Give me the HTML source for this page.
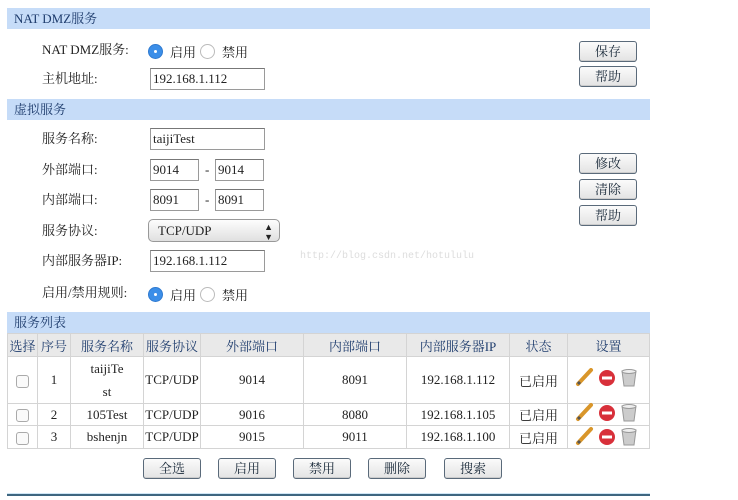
<!DOCTYPE html>
<html><head><meta charset="utf-8"><style>
*{margin:0;padding:0;box-sizing:border-box}
body{width:738px;height:500px;background:#fff;position:relative;overflow:hidden;font-family:"Liberation Serif","Noto Serif CJK SC",serif;font-size:13px;color:#222}
.a{position:absolute}
.hdr{position:absolute;left:7px;width:643px;height:21px;background:#c6dcf8;color:#1f3d6e;font-size:13px;line-height:21px;padding-left:7px}
.lbl{position:absolute;left:42px;line-height:16px}
.inp{position:absolute;height:22px;border:1px solid #9a9a9a;border-top-color:#777;background:#fff;font-size:13px;line-height:20px;padding-left:2px}
.btn{position:absolute;width:58px;height:21px;border:1px solid #5a6a7a;border-radius:3px;background:linear-gradient(#fbfbfb,#e3e3e3);text-align:center;line-height:20px;font-size:13px;color:#1a2a3a;box-shadow:inset 0 -1px 0 #ccc}
.rad{position:absolute;width:15px;height:15px;border-radius:50%}
.on{background:#3b8ee8;border:1px solid #2f7ad0}
.on:after{content:"";position:absolute;left:5px;top:5px;width:3px;height:3px;background:#fff;border-radius:50%}
.off{background:#fff;border:1px solid #bbb}
table{position:absolute;left:7px;top:333px;width:643px;border-collapse:collapse}
td,th{border:1px solid #d4d4d4;text-align:center;font-weight:normal;font-size:13px;padding:0}
th{background:#e9e9e9;color:#1f3d6e;height:23px}
.cb{display:inline-block;width:13px;height:13px;border:1px solid #aaa;border-radius:3px;background:#fafafa;vertical-align:middle}
</style></head><body>
<div class="hdr" style="top:8px">NAT DMZ服务</div>
<div class="lbl" style="top:42px">NAT DMZ服务:</div>
<div class="rad on" style="left:148px;top:44px"></div><div class="a" style="left:170px;top:42px">启用</div>
<div class="rad off" style="left:200px;top:44px"></div><div class="a" style="left:222px;top:42px">禁用</div>
<div class="lbl" style="top:71px">主机地址:</div>
<div class="inp" style="left:150px;top:68px;width:115px">192.168.1.112</div>
<div class="btn" style="left:579px;top:41px">保存</div>
<div class="btn" style="left:579px;top:66px">帮助</div>

<div class="hdr" style="top:99px">虚拟服务</div>
<div class="lbl" style="top:131px">服务名称:</div>
<div class="inp" style="left:150px;top:128px;width:115px">taijiTest</div>
<div class="lbl" style="top:162px">外部端口:</div>
<div class="inp" style="left:150px;top:159px;width:49px">9014</div><div class="a" style="left:205px;top:162px">-</div>
<div class="inp" style="left:215px;top:159px;width:49px">9014</div>
<div class="lbl" style="top:192px">内部端口:</div>
<div class="inp" style="left:150px;top:189px;width:49px">8091</div><div class="a" style="left:205px;top:192px">-</div>
<div class="inp" style="left:215px;top:189px;width:49px">8091</div>
<div class="lbl" style="top:223px">服务协议:</div>
<div class="a" style="left:148px;top:219px;width:132px;height:23px;border:1px solid #999;border-radius:5px;background:linear-gradient(#fdfdfd,#e0e0e0);padding-left:9px;line-height:21px">TCP/UDP<span style="position:absolute;right:6px;top:0;font-size:9px;line-height:10px;top:2px">▲<br>▼</span></div>
<div class="lbl" style="top:253px">内部服务器IP:</div>
<div class="inp" style="left:150px;top:250px;width:115px">192.168.1.112</div>
<div class="a" style="left:300px;top:251px;color:#ddd;font-family:'Liberation Mono',monospace;font-size:10px">http://blog.csdn.net/hotululu</div>
<div class="lbl" style="top:285px">启用/禁用规则:</div>
<div class="rad on" style="left:148px;top:287px"></div><div class="a" style="left:170px;top:285px">启用</div>
<div class="rad off" style="left:200px;top:287px"></div><div class="a" style="left:222px;top:285px">禁用</div>
<div class="btn" style="left:579px;top:153px">修改</div>
<div class="btn" style="left:579px;top:179px">清除</div>
<div class="btn" style="left:579px;top:205px">帮助</div>

<div class="hdr" style="top:312px">服务列表</div>
<table>
<tr><th style="width:30px">选择</th><th style="width:33px">序号</th><th style="width:73px">服务名称</th><th style="width:57px">服务协议</th><th style="width:103px">外部端口</th><th style="width:103px">内部端口</th><th style="width:103px">内部服务器IP</th><th style="width:58px">状态</th><th>设置</th></tr>
<tr style="height:46px"><td><span class="cb"></span></td><td>1</td><td style="line-height:23px">taijiTe<br>st</td><td>TCP/UDP</td><td>9014</td><td>8091</td><td>192.168.1.112</td><td>已启用</td><td class="ic"></td></tr>
<tr style="height:22px"><td><span class="cb"></span></td><td>2</td><td>105Test</td><td>TCP/UDP</td><td>9016</td><td>8080</td><td>192.168.1.105</td><td>已启用</td><td class="ic"></td></tr>
<tr style="height:23px"><td><span class="cb"></span></td><td>3</td><td>bshenjn</td><td>TCP/UDP</td><td>9015</td><td>9011</td><td>192.168.1.100</td><td>已启用</td><td class="ic"></td></tr>
</table>
<svg class="a" style="left:575px;top:368px" width="70" height="80">
<defs><g id="ic">
<line x1="3" y1="16" x2="16" y2="2" stroke="#d9962a" stroke-width="4" stroke-linecap="round"/><line x1="3" y1="16" x2="5" y2="14" stroke="#555" stroke-width="3"/>
<circle cx="32" cy="10" r="8" fill="#d8303a"/><rect x="27" y="8.5" width="10" height="3" fill="#fff"/>
<path d="M47 3 h14 l-2 15 h-10 z" fill="#ccc" stroke="#999"/><ellipse cx="54" cy="3.5" rx="7" ry="2" fill="#eee" stroke="#999"/>
</g></defs>
<use href="#ic" y="0"/><use href="#ic" y="35"/><use href="#ic" y="59"/>
</svg>
<div class="btn" style="left:143px;top:458px">全选</div>
<div class="btn" style="left:218px;top:458px">启用</div>
<div class="btn" style="left:293px;top:458px">禁用</div>
<div class="btn" style="left:368px;top:458px">删除</div>
<div class="btn" style="left:444px;top:458px">搜索</div>
<div class="a" style="left:7px;top:493px;width:643px;height:3px;background:#3e6680;border-top:1px solid #cfe6f5"></div>
</body></html>
